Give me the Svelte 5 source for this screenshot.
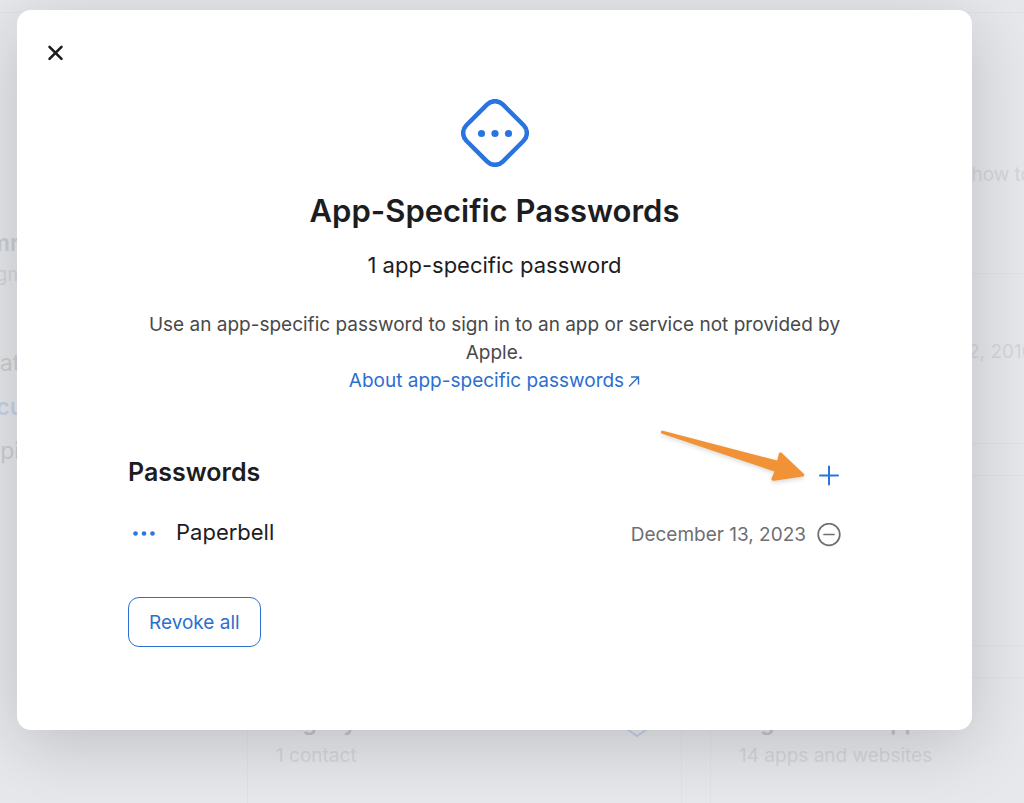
<script>
	let passwords = $state([{ id: 1, name: 'Paperbell', created: 'December 13, 2023' }]);
	let open = $state(true);

	const count = $derived(`${passwords.length} app-specific password${passwords.length === 1 ? '' : 's'}`);

	/** @param {number} id */
	function revoke(id) {
		passwords = passwords.filter((p) => p.id !== id);
	}
</script>

<div class="page">
	<div class="account" aria-hidden="true">
		<aside class="sidebar">
			<strong>mm</strong>
			<small>gm</small>
			<span>at</span>
			<span class="current">cu</span>
			<span>pi</span>
		</aside>
		<div class="content">
			<p class="intro">how to</p>
			<div class="cards">
				<div class="card"></div>
				<div class="card"><span class="changed">2, 2016</span></div>
				<div class="card"></div>
				<div class="card"></div>
				<div class="card">
					<div>
						<strong>Legacy Contact</strong>
						<p>1 contact</p>
					</div>
					<svg class="shield" width="32" height="32" viewBox="0 0 32 32">
						<path d="M16 1 29 5V21L16 30 3 21V5Z" />
					</svg>
				</div>
				<div class="card">
					<div>
						<strong>Sign in with Apple</strong>
						<p>14 apps and websites</p>
					</div>
				</div>
			</div>
		</div>
	</div>

	{#if open}
		<div class="modal" role="dialog" aria-modal="true" aria-labelledby="modal-title">
			<button class="close" aria-label="Close" onclick={() => (open = false)}>
				<svg width="32" height="32" viewBox="0 0 32 32">
					<path d="M10.500 9.800 22.500 21.800M22.500 9.800 10.500 21.800" />
				</svg>
			</button>

			<header>
				<svg class="hero" width="68" height="68" viewBox="0 0 68 68">
					<rect x="8.250" y="8.250" width="51.500" height="51.500" rx="11" transform="rotate(45 34 34)" />
					<circle cx="20.500" cy="34.500" r="3.600" />
					<circle cx="34" cy="34.500" r="3.600" />
					<circle cx="47.500" cy="34.500" r="3.600" />
				</svg>
				<h1 id="modal-title">App-Specific Passwords</h1>
				<p class="count">{count}</p>
				<p class="description">
					Use an app-specific password to sign in to an app or service not provided by Apple.
				</p>
				<a href="#about">
					About app-specific passwords
					<svg width="12" height="12" viewBox="0 0 12 12">
						<path d="M1 11.500 10.500 2M3 2H10.500V9.500" />
					</svg>
				</a>
			</header>

			<section>
				<div class="heading">
					<h2>Passwords</h2>
					<button class="icon add" aria-label="Generate a password">
						<svg width="24" height="24" viewBox="0 0 24 24">
							<path d="M12 3.500V21.500M3 12.500H21" />
						</svg>
					</button>
					<svg class="arrow" width="156" height="64" viewBox="0 0 156 64">
						<path
							d="M6 4.500 Q4 5.500 5.500 7.500 L118.500 45.500 115.500 52.500 Q115 55 118 54.800 L147 50.500 Q149.500 49.500 147.500 47.500 L125.500 26.800 Q123.500 25.500 122.800 28 L121.200 34.500Z"
						/>
					</svg>
				</div>

				<ul>
					{#each passwords as password (password.id)}
						<li>
							<svg class="dots" width="24" height="32" viewBox="0 0 24 32">
								<circle cx="3.500" cy="17.500" r="2.300" />
								<circle cx="12" cy="17.500" r="2.300" />
								<circle cx="20.500" cy="17.500" r="2.300" />
							</svg>
							<span class="name">{password.name}</span>
							<span class="created">{password.created}</span>
							<button class="icon" aria-label="Revoke {password.name}" onclick={() => revoke(password.id)}>
								<svg width="24" height="24" viewBox="0 0 24 24">
									<circle cx="12" cy="11.500" r="10.800" />
									<path d="M7 11.500H17" />
								</svg>
							</button>
						</li>
					{/each}
				</ul>

				<button class="revoke" onclick={() => (passwords = [])}>Revoke all</button>
			</section>
		</div>
	{/if}
</div>

<style>
	:global(body) {
		margin: 0;
		background: #e7e8ec;
	}

	.page {
		position: relative;
		min-height: 100vh;
		overflow: hidden;
		box-sizing: border-box;
		padding: 10px 52px 72px 17px;
		font-family: Inter, 'Liberation Sans', sans-serif;
		font-size: 19px;
		color: #1d1d1f;
	}

	h1,
	h2,
	p,
	ul {
		margin: 0;
		padding: 0;
	}

	button {
		padding: 0;
		border: 0;
		background: none;
		font: inherit;
		cursor: pointer;
	}

	svg {
		display: block;
		flex: none;
		fill: none;
	}

	/* account page, dimmed behind the dialog */
	.account {
		position: absolute;
		inset: 12px 0 0;
		display: grid;
		grid-template-columns: 247px 1fr;
		border-top: 1px solid #e0e1e5;
		overflow: hidden;
		color: #d5d6da;
	}

	.sidebar {
		display: flex;
		flex-direction: column;
		width: 20px;
		padding-top: 214px;
		align-items: center;
		font-size: 23px;
		line-height: 32px;
	}

	.sidebar strong {
		font-weight: 600;
		color: #cdced2;
	}

	.sidebar small {
		font-size: 19px;
		margin-bottom: 56px;
	}

	.sidebar span {
		margin-bottom: 12px;
		color: #cdced2;
	}

	.sidebar .current {
		font-weight: 600;
		color: #c8d3e8;
	}

	.content {
		min-width: 0;
	}

	.intro {
		height: 112px;
		padding-top: 148px;
		line-height: 28px;
		text-align: right;
		margin-right: -8px;
	}

	.cards {
		display: grid;
		grid-template-columns: 435px 435px;
		grid-auto-rows: 171px;
		gap: 31px 28px;
	}

	.card {
		display: flex;
		justify-content: space-between;
		box-sizing: border-box;
		padding: 28px;
		border: 1px solid #e1e2e6;
		border-radius: 2px;
		line-height: 32px;
	}

	.card strong {
		font-size: 23px;
		font-weight: 600;
		color: #c4c4c9;
	}

	.changed {
		margin: 34px 0 0 229px;
	}

	.shield {
		stroke: #c3d0e8;
		stroke-width: 2;
	}

	.modal {
		position: relative;
		border-radius: 14px;
		background: #fff;
		box-shadow: 0 14px 70px rgba(0, 0, 0, 0.18);
		padding: 27px 111px 83px;
	}

	.close {
		display: block;
		margin-left: -89px;
	}

	.close path {
		stroke: #1d1d1f;
		stroke-width: 2.6;
		stroke-linecap: round;
	}

	header {
		display: flex;
		flex-direction: column;
		align-items: center;
		margin-top: 30px;
		text-align: center;
		line-height: 28px;
	}

	.hero rect {
		stroke: #2a74e0;
		stroke-width: 4.5;
	}

	.hero circle,
	.dots circle {
		fill: #2a74e0;
	}

	h1 {
		margin-top: 24px;
		font-size: 31px;
		line-height: 40px;
		font-weight: 600;
	}

	.count {
		margin-top: 18px;
		font-size: 22px;
		line-height: 32px;
	}

	.description {
		max-width: 720px;
		margin-top: 30px;
		color: #494949;
	}

	a {
		display: flex;
		align-items: center;
		gap: 4px;
		color: #2b6fd0;
		text-decoration: none;
	}

	a path {
		stroke: #2b6fd0;
		stroke-width: 1.4;
	}

	section {
		margin-top: 61px;
		padding-right: 20px;
	}

	.heading {
		position: relative;
		display: flex;
		justify-content: space-between;
		align-items: flex-end;
	}

	h2 {
		font-size: 25px;
		line-height: 32px;
		font-weight: 600;
	}

	.icon {
		display: flex;
		align-items: center;
		height: 26px;
	}

	.icon path,
	.icon circle {
		stroke: #6e6e73;
		stroke-width: 1.7;
		stroke-linecap: round;
	}

	.add path {
		stroke: #2a74e0;
		stroke-width: 2;
	}

	.arrow {
		position: absolute;
		right: 29px;
		top: -30px;
		fill: #f09235;
		filter: drop-shadow(0 2px 2px rgba(0, 0, 0, 0.15));
		pointer-events: none;
	}

	ul {
		margin-top: 28px;
		list-style: none;
	}

	li {
		display: flex;
		align-items: flex-end;
		line-height: 26px;
	}

	.dots {
		margin-left: 4px;
	}

	.name {
		flex: 1;
		margin-left: 20px;
		font-size: 22px;
		line-height: 32px;
	}

	.created {
		margin-right: 11px;
		color: #6e6e73;
	}

	.revoke {
		margin-top: 49px;
		height: 50px;
		padding: 0 20px;
		border: 1px solid #2b6fd0;
		border-radius: 11px;
		color: #2b6fd0;
	}
</style>
